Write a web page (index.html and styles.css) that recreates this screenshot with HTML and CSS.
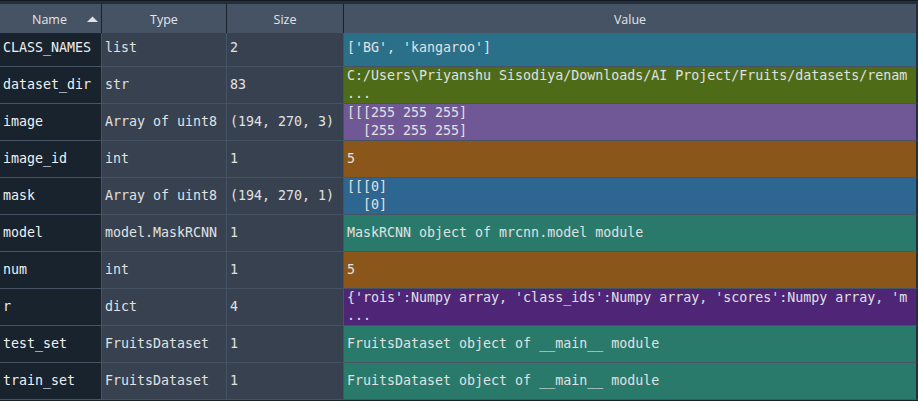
FILE: index.html
```html
<!DOCTYPE html>
<html>
<head>
<meta charset="utf-8">
<link rel="stylesheet" href="styles.css">
</head>
<body>
<div class="table">
  <div class="head">
    <div class="hcell name-h"><span>Name</span><svg class="sort" width="11" height="6" viewBox="0 0 11 6"><polygon points="0,6 5.5,0.5 11,6" fill="#dfe2e6"/></svg></div>
    <div class="hcell">Type</div>
    <div class="hcell">Size</div>
    <div class="hcell last">Value</div>
  </div>
  <div class="viewport">
    <div class="rows">
      <div class="row"><div class="c n">CLASS_NAMES</div><div class="c t">list</div><div class="c s">2</div><div class="c v list">['BG', 'kangaroo']</div></div>
      <div class="row"><div class="c n">dataset_dir</div><div class="c t">str</div><div class="c s">83</div><div class="c v str">C:/Users\Priyanshu Sisodiya/Downloads/AI Project/Fruits/datasets/renam<br>...</div></div>
      <div class="row"><div class="c n">image</div><div class="c t">Array of uint8</div><div class="c s">(194, 270, 3)</div><div class="c v arr">[[[255 255 255]<br>  [255 255 255]</div></div>
      <div class="row"><div class="c n">image_id</div><div class="c t">int</div><div class="c s">1</div><div class="c v int">5</div></div>
      <div class="row"><div class="c n">mask</div><div class="c t">Array of uint8</div><div class="c s">(194, 270, 1)</div><div class="c v arr2">[[[0]<br>  [0]</div></div>
      <div class="row"><div class="c n">model</div><div class="c t">model.MaskRCNN</div><div class="c s">1</div><div class="c v obj">MaskRCNN object of mrcnn.model module</div></div>
      <div class="row"><div class="c n">num</div><div class="c t">int</div><div class="c s">1</div><div class="c v int">5</div></div>
      <div class="row"><div class="c n">r</div><div class="c t">dict</div><div class="c s">4</div><div class="c v dict">{'rois':Numpy array, 'class_ids':Numpy array, 'scores':Numpy array, 'm<br>...</div></div>
      <div class="row"><div class="c n">test_set</div><div class="c t">FruitsDataset</div><div class="c s">1</div><div class="c v obj">FruitsDataset object of __main__ module</div></div>
      <div class="row"><div class="c n">train_set</div><div class="c t">FruitsDataset</div><div class="c s">1</div><div class="c v obj">FruitsDataset object of __main__ module</div></div>
    </div>
  </div>
</div>
</body>
</html>
```

FILE: styles.css
```css
html, body {
  margin: 0;
  padding: 0;
  background: #19232d;
}
.table {
  width: 918px;
  height: 401px;
  overflow: hidden;
  border-top: 1px solid #121920;
  box-sizing: border-box;
  padding-top: 3px;
  background: #252f3b;
}
.head {
  display: grid;
  grid-template-columns: 102px 125px 117px 1fr;
  height: 29px;
  background: #455364;
  font-family: "Open Sans", "Noto Sans", sans-serif;
  font-size: 12.5px;
  color: #e4e6e9;
}
.hcell {
  display: flex;
  align-items: center;
  justify-content: center;
  padding-top: 1px;
  box-sizing: border-box;
  border-right: 1px solid #19232d;
  position: relative;
}
.hcell.last {
  border-right: 2px solid #252f3b;
}
.name-h span {
  margin-right: 2px;
}
.sort {
  position: absolute;
  left: 87px;
  top: 12px;
}
.viewport {
  height: 368px;
  overflow: hidden;
  border-bottom: 1px solid #19232d;
  box-sizing: border-box;
}
.rows {
  margin-top: -3px;
}
.row {
  display: grid;
  grid-template-columns: 102px 125px 117px 1fr;
  grid-template-rows: 37px;
  height: 37px;
  font-family: "DejaVu Sans Mono", monospace;
  font-size: 13.3px;
  color: #e0e1e3;
}
.c {
  display: flex;
  align-items: center;
  box-sizing: border-box;
  height: 37px;
  overflow: hidden;
  border-right: 1px solid #455364;
  border-bottom: 1px solid #455364;
  white-space: pre;
  line-height: 18px;
}
.n {
  background: #19232d;
  padding-left: 3px;
  color: #eef0f2;
}
.t, .s {
  background: #37414f;
  padding-left: 3px;
}
.v {
  padding-left: 3px;
  border-right: 2px solid #252f3b;
}
.list { background: #2b7089; }
.str { background: #4e6b18; }
.arr { background: #705896; }
.int { background: #8b5619; }
.arr2 { background: #2e6692; }
.obj { background: #297a6a; }
.dict { background: #4f2578; }
```
